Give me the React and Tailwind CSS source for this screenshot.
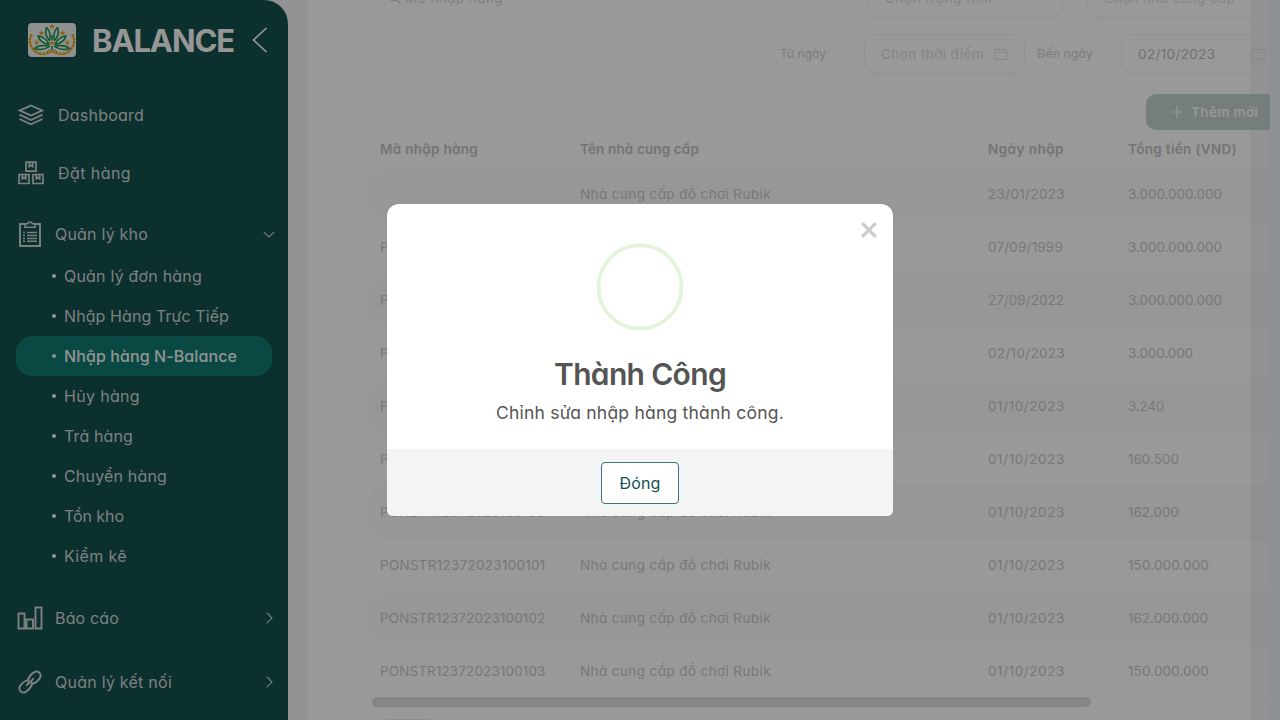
import { useLayoutEffect, useRef } from "react";

/* Text whose tracking is adjusted so that the line takes up a given width. */
function Label({ w, className = "", children }) {
  const ref = useRef(null);
  useLayoutEffect(() => {
    const el = ref.current;
    el.style.letterSpacing = "0px";
    const natural = el.getBoundingClientRect().width;
    el.style.letterSpacing = `${(w - natural) / el.textContent.length}px`;
  }, [w, children]);
  return (
    <span ref={ref} className={`inline-block whitespace-nowrap ${className}`}>
      {children}
    </span>
  );
}

function Logo() {
  const star = "M0-3 .8-.9 3-.9 1.2.5 1.9 2.6 0 1.3-1.9 2.6-1.2.5-3-.9-.8-.9Z";
  const grains = [
    [3.2, 12.5], [2, 16], [1.9, 19.5], [2.8, 23], [5, 26], [8, 28.6], [11.8, 30.4], [15.8, 30.8], [19.4, 29.6],
  ];
  return (
    <svg width="48" height="34" viewBox="0 0 48 34" className="shrink-0 rounded">
      <rect width="48" height="34" fill="#f0f0f0" />
      <g fill="#e0a81c">
        {[[24, 3.4], [13.5, 10], [34.5, 10], [8.5, 19.6], [39.5, 19.6], [24, 20]].map(([x, y]) => (
          <path key={x + "-" + y} d={star} transform={`translate(${x} ${y})`} />
        ))}
        {grains.map(([x, y]) => (
          <g key={y}>
            <circle cx={x} cy={y} r="1.4" />
            <circle cx={48 - x} cy={y} r="1.4" />
          </g>
        ))}
      </g>
      <g fill="none" stroke="#e0a81c" strokeWidth="1.200">
        <path d="M3 12C0 22 6 31 15 31.500C21 31.500 24 27 28 27.500" />
        <path d="M45 12C48 22 42 31 33 31.500C27 31.500 24 27 20 27.500" />
      </g>
      <g fill="none" stroke="#12924c" strokeWidth="1.500" strokeLinejoin="round">
        <path d="M18.500 4.500C16.500 10 18 14 21.500 17.500C23 12 22 8 18.500 4.500Z" />
        <path d="M29.500 4.500C31.500 10 30 14 26.500 17.500C25 12 26 8 29.500 4.500Z" />
        <path d="M10 13C11.500 18 15 20.500 21 21.500C18.500 16 15 13.500 10 13Z" />
        <path d="M38 13C36.500 18 33 20.500 27 21.500C29.500 16 33 13.500 38 13Z" />
        <path d="M6.500 25.500C11 27 17 26.500 21.500 23.500C15 21.500 10 22.500 6.500 25.500Z" />
        <path d="M41.500 25.500C37 27 31 26.500 26.500 23.500C33 21.500 38 22.500 41.500 25.500Z" />
        <path d="M24 12V17M24 23V27" />
      </g>
    </svg>
  );
}

function LayersIcon() {
  return (
    <svg width="26" height="22" viewBox="0 0 26 22" fill="none" stroke="currentColor" strokeWidth="1.900">
      <path d="M13 1.500 24 6.500 13 11.500 2 6.500Z" />
      <path d="M1.500 10.700 13 16 24.500 10.700M1.500 15 13 20.300 24.500 15" />
    </svg>
  );
}

function BoxesIcon() {
  const box = "M1 1H11V10H1ZM4.300 1V5.300L6 4 7.700 5.300V1";
  return (
    <svg width="26" height="24" viewBox="0 0 26 24" fill="none" stroke="currentColor" strokeWidth="1.700">
      <path d={box} transform="translate(7 0.200)" />
      <path d={box} transform="translate(0 12.500)" />
      <path d={box} transform="translate(14 12.500)" />
    </svg>
  );
}

function ClipboardIcon() {
  return (
    <svg width="22" height="26" viewBox="0 0 22 26" fill="none" stroke="currentColor" strokeWidth="1.900">
      <path d="M6 3H1V25H21V3H16" />
      <path d="M6 2.800H8.700C9 .5 13 .5 13.300 2.800H16V6.200H6Z" strokeWidth="1.600" />
      <path d="M4 11.500H6M8 11.500H18M4 14.500H6M8 14.500H18M4 17.500H6M8 17.500H18M4 20.300H6M8 20.300H18" strokeWidth="1.600" />
    </svg>
  );
}

function ChartIcon() {
  return (
    <svg width="26" height="24" viewBox="0 0 26 24" fill="none" stroke="currentColor" strokeWidth="1.900">
      <path d="M1.500 7.500H7.500V22.500H1.500ZM9.500 13.500H16V22.500H9.500ZM18.500 1.500H24.500V22.500H18.500Z" />
    </svg>
  );
}

function LinkIcon() {
  return (
    <svg width="24" height="24" viewBox="0 0 24 24" fill="none" stroke="currentColor" strokeWidth="1.900" strokeLinecap="round">
      <path d="M10.800 12.600C8.800 10 10.500 7.600 13.800 4C16.500 1.100 19.500.8 21.400 2.600C23.400 4.500 23 7.300 20.300 10C17.800 12.600 16.500 13.800 14.300 13.600" />
      <path d="M13.200 11.400C15.200 14 13.500 16.400 10.200 20C7.500 22.900 4.500 23.200 2.600 21.400C.6 19.500 1 16.700 3.700 14C6.200 11.400 7.500 10.200 9.700 10.400" />
      <path d="M8.800 15.200 15.200 8.800" />
    </svg>
  );
}

function Chevron({ down }) {
  return (
    <svg width="12" height="12" viewBox="0 0 12 12" fill="none" stroke="currentColor" strokeWidth="1.100">
      <path d={down ? "M.7 3.800 6 9 11.300 3.800" : "M3.800.8 9 6 3.800 11.200"} />
    </svg>
  );
}

function CalendarIcon() {
  return (
    <svg width="14" height="14" viewBox="0 0 14 14" fill="none" stroke="#e2e2e2" strokeWidth="1">
      <path d="M1 2.500H13V12.500H1ZM1 5.700H13M4.500.5V4M9.500.5V4" />
    </svg>
  );
}

const subItems = [
  ["Quản lý đơn hàng", 138],
  ["Nhập Hàng Trực Tiếp", 165],
  ["Nhập hàng N-Balance", 173],
  ["Hủy hàng", 76],
  ["Trả hàng", 69],
  ["Chuyển hàng", 103],
  ["Tồn kho", 60],
  ["Kiểm kê", 63],
];

function Sidebar() {
  return (
    <aside className="flex h-[720px] w-[288px] shrink-0 flex-col overflow-hidden rounded-tr-[24px] bg-[#14504d] text-base text-[#d0d6d7]">
      <div className="flex h-20 shrink-0 items-center pl-7">
        <Logo />
        <div className="ml-4 w-[160px] pt-0.5 text-[31px] font-bold text-[#fafafa]">
          <Label w={142}>BALANCE</Label>
        </div>
        <svg width="16" height="26" viewBox="0 0 16 26" fill="none" stroke="#fff" strokeWidth="1.700">
          <path d="M14.500 1 1.500 13 14.500 25" />
        </svg>
      </div>
      <div className="mt-[6px] flex h-[58px] shrink-0 items-center pl-[18px]">
        <div className="w-10"><LayersIcon /></div>
        <Label w={86}>Dashboard</Label>
      </div>
      <div className="flex h-[58px] shrink-0 items-center pl-[18px]">
        <div className="w-10"><BoxesIcon /></div>
        <Label w={73}>Đặt hàng</Label>
      </div>
      <div className="mt-[10px] flex h-11 shrink-0 items-center pl-[19px]">
        <div className="w-9"><ClipboardIcon /></div>
        <Label w={93}>Quản lý kho</Label>
        <div className="ml-auto mr-[13px]"><Chevron down /></div>
      </div>
      {subItems.map(([text, w], i) => (
        <div
          key={text}
          className={`mx-4 flex h-10 shrink-0 items-center rounded-2xl pl-9 ${i === 2 ? "bg-[#117870] font-medium text-[#f4f6f6]" : ""}`}
        >
          <span className="mr-2 size-1 rounded-full bg-[#f4f6f6]" />
          <Label w={w}>{text}</Label>
        </div>
      ))}
      <div className="mt-[10px] flex h-16 shrink-0 items-center pl-[17px]">
        <div className="w-[38px]"><ChartIcon /></div>
        <Label w={64}>Báo cáo</Label>
        <div className="ml-auto mr-[13px]"><Chevron /></div>
      </div>
      <div className="flex h-16 shrink-0 items-center pl-[18px]">
        <div className="w-[37px]"><LinkIcon /></div>
        <Label w={117}>Quản lý kết nối</Label>
        <div className="ml-auto mr-[13px]"><Chevron /></div>
      </div>
    </aside>
  );
}

const supplier = "Nhà cung cấp đồ chơi Rubik";
const rows = [
  ["", "23/01/2023", 77, "3.000.000.000", 94],
  ["PONSTR12372023100096", "07/09/1999", 75, "3.000.000.000", 94],
  ["PONSTR12372023100097", "27/09/2022", 76, "3.000.000.000", 94],
  ["PONSTR12372023100098", "02/10/2023", 77, "3.000.000", 65],
  ["PONSTR12372023100099", "01/10/2023", 77, "3.240", 36],
  ["PONSTR12372023100099", "01/10/2023", 77, "160.500", 51],
  ["PONSTR12372023100100", "01/10/2023", 77, "162.000", 51],
  ["PONSTR12372023100101", "01/10/2023", 77, "150.000.000", 81],
  ["PONSTR12372023100102", "01/10/2023", 77, "162.000.000", 80],
  ["PONSTR12372023100103", "01/10/2023", 77, "150.000.000", 81],
];

function Table() {
  return (
    <div className="w-[920px] shrink-0 text-[13.5px] text-[#c9c9c9]">
      <div className="grid h-[38px] grid-cols-[200px_408px_140px_142px] items-center pl-2 font-semibold text-[#c2c2c2]">
        <span><Label w={98}>Mã nhập hàng</Label></span>
        <span><Label w={119}>Tên nhà cung cấp</Label></span>
        <span><Label w={76}>Ngày nhập</Label></span>
        <span><Label w={109}>Tổng tiền (VND)</Label></span>
      </div>
      {rows.map(([code, date, dw, total, tw], i) => (
        <div
          key={i}
          className={`grid h-[53px] grid-cols-[200px_408px_140px_142px] items-center rounded-[10px] border-b border-black/[0.015] pl-2 ${i % 2 === 0 ? "bg-black/[0.012]" : ""}`}
        >
          <span>{code && <Label w={165.5}>{code}</Label>}</span>
          <span><Label w={191}>{supplier}</Label></span>
          <span><Label w={dw}>{date}</Label></span>
          <span><Label w={tw}>{total}</Label></span>
        </div>
      ))}
      <div className="-mt-px h-[10px] w-[719px] rounded-full bg-[#dfdfdf]" />
      <div className="ml-[7px] mt-3 h-8 w-[56px] rounded-lg bg-[#ececec]" />
    </div>
  );
}

function Field({ className = "", children }) {
  return (
    <div className={`flex h-10 shrink-0 items-center rounded-xl border ${className}`}>
      {children}
    </div>
  );
}

function Content() {
  return (
    <div className="flex h-[720px] w-[942px] flex-col bg-white pl-16 text-[13.5px] text-[#dedede]">
      <div className="-mt-[22px] flex w-[910px] shrink-0">
        <Field className="mr-[176px] w-[320px] border-[#f8f8f8] pl-[15px] text-[#d6d6d6]">
          <svg width="14" height="14" viewBox="0 0 14 14" fill="none" stroke="#c8c8c8" strokeWidth="1.200">
            <circle cx="5.500" cy="5.500" r="4.500" />
            <path d="m8.800 8.800 3.700 3.700" />
          </svg>
          <Label w={98} className="ml-[3px]">Mã nhập hàng</Label>
        </Field>
        <Field className="mr-6 w-[195px] border-[#f0f0f0] pl-4">
          <Label w={107}>Chọn trạng thái</Label>
        </Field>
        <Field className="w-[195px] border-[#f0f0f0] pl-4">
          <Label w={131}>Chọn nhà cung cấp</Label>
        </Field>
      </div>
      <div className="mt-4 flex w-[910px] shrink-0 items-center pl-[408px] text-xs text-[#cfcfcf]">
        <div className="w-[84px]"><Label w={46}>Từ ngày</Label></div>
        <Field className="w-[161px] justify-between border-[#f0f0f0] pl-4 pr-[16px] text-[13.5px] text-[#dedede]">
          <Label w={103} className="pt-px">Chọn thời điểm</Label>
          <CalendarIcon />
        </Field>
        <div className="ml-3 w-[84px]"><Label w={56}>Đến ngày</Label></div>
        <Field className="w-[161px] justify-between border-[#f0f0f0] pl-4 pr-[16px] text-[13.5px] text-[#bdbdbd]">
          <Label w={77.5} className="pt-px">02/10/2023</Label>
          <CalendarIcon />
        </Field>
      </div>
      <div className="mt-5 flex w-[910px] shrink-0 pl-[774px]">
        <div className="flex h-9 w-[136px] shrink-0 items-center rounded-[10px] bg-[#c1d4d0] pl-[25px] font-semibold text-[#fafafa]">
          <svg width="12" height="12" viewBox="0 0 12 12" stroke="currentColor" strokeWidth="1.200">
            <path d="M6 .5V11.500M.5 6H11.500" />
          </svg>
          <Label w={67.5} className="ml-2">Thêm mới</Label>
        </div>
      </div>
      <Table />
    </div>
  );
}

function Dialog() {
  return (
    <div className="relative flex h-[312px] w-[506px] flex-col items-center overflow-hidden rounded-t-xl rounded-b-md bg-white text-[#545454]">
      <svg className="absolute top-[18px] right-[16px]" width="16" height="16" viewBox="0 0 16 16" stroke="#ccc" strokeWidth="3.200">
        <path d="M1.200 1.200 14.800 14.800M14.800 1.200 1.200 14.800" />
      </svg>
      <svg className="mt-[39px] shrink-0" width="88" height="88" viewBox="0 0 88 88" fill="none" stroke="#e2f4da" strokeWidth="3.800">
        <circle cx="44" cy="44" r="41.600" />
      </svg>
      <div className="mt-[19px] flex h-12 shrink-0 items-center text-[30px] font-semibold">
        <Label w={172}>Thành Công</Label>
      </div>
      <div className="mt-[1.5px] flex h-7 shrink-0 items-center text-[17.5px]">
        <Label w={288}>Chỉnh sửa nhập hàng thành công.</Label>
      </div>
      <div className="mt-auto flex h-[67px] w-full items-center justify-center bg-[#f2f4f6]">
        <button className="flex h-[42px] w-[78px] items-center justify-center rounded-[4px] border border-[#3f7673] bg-white text-base text-[#14504d]">
          <Label w={41}>Đóng</Label>
        </button>
      </div>
    </div>
  );
}

export default function App() {
  return (
    <div className="relative h-[720px] w-[1280px] overflow-hidden bg-[#f3f3f8] font-['Inter','Noto_Sans',sans-serif] [font-feature-settings:'cv11'_1]">
      <div className="flex h-[720px]">
        <Sidebar />
        <main className="h-[720px] w-[982px] overflow-hidden pl-5">
          <Content />
        </main>
        <div className="h-[720px] w-[10px] bg-[#e8f2f9]" />
      </div>
      <div className="absolute inset-0 flex items-center justify-center bg-black/40">
        <Dialog />
      </div>
    </div>
  );
}
